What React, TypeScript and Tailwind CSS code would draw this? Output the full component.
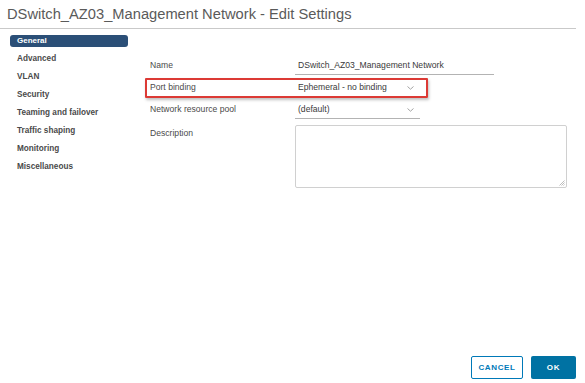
import React from 'react'

const NAV = ['General', 'Advanced', 'VLAN', 'Security', 'Teaming and failover', 'Traffic shaping', 'Monitoring', 'Miscellaneous']

function Chevron() {
  return (
    <svg width="7" height="4" viewBox="0 0 7 4" className="mr-[6px]">
      <path d="M0.5 0.5 L3.5 3.2 L6.5 0.5" fill="none" stroke="#9a9a9a" strokeWidth="0.9" />
    </svg>
  )
}

function Select({ value }: { value: string }) {
  return (
    <div className="flex h-[20px] w-[125px] items-center justify-between border-b border-[#b3b3b3] pl-[3px] pt-[2px]">
      <span>{value}</span>
      <Chevron />
    </div>
  )
}

export default function App() {
  return (
    <div className="flex h-[383px] w-[585px] flex-col bg-white font-['Liberation_Sans',Arial,sans-serif] text-[#3a3a3a]">
      <div className="mr-[9px] h-[29px] border-b border-[#c9c9c9] pl-[7px] pt-[6px] text-[14.7px] leading-[17px] text-[#5a5a5a]">
        DSwitch_AZ03_Management Network - Edit Settings
      </div>

      <div className="flex flex-1">
        {/* left nav */}
        <div className="w-[128px] shrink-0 pl-[10px] pt-[3px]">
          {NAV.map((item, i) => (
            <div key={item} className="flex h-[18px] items-center">
              {i === 0 ? (
                <div className="h-[12px] w-[118px] rounded-[3px] bg-[#2b4f77] pl-[7px] text-[8px] font-bold leading-[12px] text-white">
                  {item}
                </div>
              ) : (
                <div className="pl-[7px] text-[8.2px] font-bold text-[#4a4a4a]">{item}</div>
              )}
            </div>
          ))}
        </div>

        {/* form */}
        <div className="ml-[22px] flex-1 pt-[25px] text-[8.6px]">
          <div className="flex h-[22px] items-center">
            <div className="w-[145px] text-[#4a4a4a]">Name</div>
            <div className="flex h-[19px] w-[199px] items-center border-b border-[#b3b3b3] pl-[3px] pt-[2px]">
              DSwitch_AZ03_Management Network
            </div>
          </div>

          <div className="relative flex h-[22px] items-center">
            <div className="absolute -left-[5px] top-[2px] h-[20px] w-[283px] rounded-[1px] border-2 border-[#dc3a35] shadow-[1px_2px_3px_rgba(0,0,0,0.25)]" />
            <div className="w-[145px] text-[#4a4a4a]">Port binding</div>
            <Select value="Ephemeral - no binding" />
          </div>

          <div className="flex h-[22px] items-center">
            <div className="w-[145px] text-[#4a4a4a]">Network resource pool</div>
            <Select value="(default)" />
          </div>

          <div className="mt-[5px] flex">
            <div className="w-[145px] pt-[2px] text-[#4a4a4a]">Description</div>
            <div className="relative h-[63px] w-[272px] rounded-[2px] border border-[#d0d0d0]">
              <svg width="6" height="6" viewBox="0 0 6 6" className="absolute bottom-[1px] right-[1px]">
                <path d="M5.5 0.5 L0.5 5.5 M5.5 2.5 L2.5 5.5 M5.5 4.5 L4.5 5.5" stroke="#a0a0a0" strokeWidth="0.7" />
              </svg>
            </div>
          </div>
        </div>
      </div>

      <div className="mb-[4px] mr-[9px] flex justify-end gap-[8px]">
        <button className="h-[23px] w-[52px] rounded-[2px] border border-[#0079b8] text-[8px] font-bold tracking-[0.08em] text-[#0079b8]">
          CANCEL
        </button>
        <button className="h-[23px] w-[45px] rounded-[2px] bg-[#0072a3] text-[8px] font-bold tracking-[0.08em] text-white">
          OK
        </button>
      </div>
    </div>
  )
}
